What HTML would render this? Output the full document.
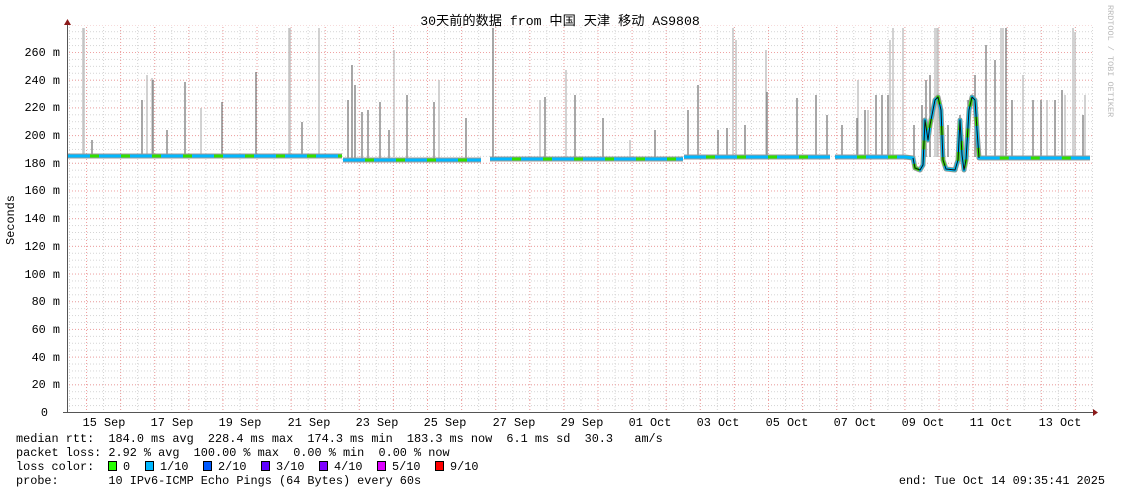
<!DOCTYPE html>
<html><head><meta charset="utf-8"><style>
html,body{margin:0;padding:0;background:#fff;}
body{width:1121px;height:494px;position:relative;overflow:hidden;font-family:"Liberation Mono","DejaVu Sans Mono","Noto Sans CJK SC",monospace;}
svg{position:absolute;left:0;top:0;}
.t{font-family:"Liberation Mono","Noto Sans CJK SC",monospace;font-size:11.85px;fill:#000;}
</style></head><body>
<svg width="1121" height="494" viewBox="0 0 1121 494">
<defs>
<pattern id="hmin" x="0" y="412" width="1025" height="6.923" patternUnits="userSpaceOnUse">
<line x1="0" y1="0.5" x2="1025" y2="0.5" stroke="#d4d4d4" stroke-width="1" stroke-dasharray="1,2"/>
</pattern>
<pattern id="vmin" x="86" y="0" width="17.05" height="400" patternUnits="userSpaceOnUse">
<line x1="0.5" y1="0" x2="0.5" y2="400" stroke="#d4d4d4" stroke-width="1" stroke-dasharray="1,2"/>
</pattern>
<pattern id="hmaj" x="0" y="412" width="1025" height="27.69" patternUnits="userSpaceOnUse">
<line x1="0" y1="0.5" x2="1025" y2="0.5" stroke="#f0a0a0" stroke-width="1" stroke-dasharray="1,2"/>
</pattern>
<pattern id="vmaj" x="86" y="0" width="34.1" height="400" patternUnits="userSpaceOnUse">
<line x1="0.5" y1="0" x2="0.5" y2="400" stroke="#f0a0a0" stroke-width="1" stroke-dasharray="1,2"/>
</pattern>
</defs>
<rect x="67" y="25" width="1026" height="387" fill="url(#hmin)"/>
<rect x="67" y="25" width="1026" height="387" fill="url(#vmin)"/>
<rect x="67" y="25" width="1026" height="387" fill="url(#hmaj)"/>
<rect x="67" y="25" width="1026" height="387" fill="url(#vmaj)"/>

<g stroke="#c4c4c4" stroke-width="1.5">
<path d="M83 157V28M84 157V28M147 157V75M152 157V78M201 157V108M289 157V28M290 157V28M319 157V28M394 157V50M566 157V70M733 157V28M736 157V40M766 157V50M890 157V40M893 157V28M903 157V28M935 157V28M937 157V28M938 157V28M1001 157V28M1003 157V28M1073 157V28M1075 157V32M1085 157V95M439 160V80M540 160V100M630 160V140M858 157V80M868 157V110M1023 157V75M1047 157V100M1065 157V95"/>
</g>
<g stroke="#7a7a7a" stroke-width="1.3">
<path d="M92 157V140M142 157V100M153 157V80M167 157V130M185 157V82M222 157V102M256 157V72M302 157V122M348 160V100M352 160V65M355 160V85M362 160V112M368 160V110M380 160V102M389 160V130M407 160V95M434 160V102M466 160V118M493 160V28M545 160V97M575 160V95M603 160V118M655 160V130M688 157V110M698 157V85M718 157V130M727 157V128M745 157V125M767 157V92M797 157V98M816 157V95M827 157V115M842 157V125M857 157V118M865 157V110M876 157V95M882 157V95M888 157V95M914 157V125M922 157V105M926 157V80M930 157V75M948 157V125M960 157V115M968 157V100M975 157V75M986 157V45M995 157V60M1006 157V28M1012 157V100M1033 157V100M1041 157V100M1055 157V100M1062 157V90M1083 157V115"/>
</g>
<g fill="none" stroke-linejoin="round">
<path id="m" d="M68 156H342 M343 160H481 M490 159H683 M684 157H830 M835 157H905 L913 158 L915 168 L920 170 L923 165 L925 120 L928 140 L930 125 L935 100 L938 97 L941 110 L943 160 L946 169 L955 170 L958 160 L960 120 L962 155 L964 170 L966 160 L969 110 L972 97 L975 100 L977 130 L979 158 H1090" stroke="#999" stroke-width="5"/>
<path d="M68 156H342 M343 160H481 M490 159H683 M684 157H830 M835 157H905 L913 158 L915 168 L920 170 L923 165 L925 120 L928 140 L930 125 L935 100 L938 97 L941 110 L943 160 L946 169 L955 170 L958 160 L960 120 L962 155 L964 170 L966 160 L969 110 L972 97 L975 100 L977 130 L979 158 H1090" stroke="#2fe000" stroke-width="3"/>
<path d="M68 156H342 M343 160H481 M490 159H683 M684 157H830 M835 157H905 L913 158 L915 168 L920 170 L923 165 L925 120 L928 140 L930 125 L935 100 L938 97 L941 110 L943 160 L946 169 L955 170 L958 160 L960 120 L962 155 L964 170 L966 160 L969 110 L972 97 L975 100 L977 130 L979 158 H1090" stroke="#00b8ff" stroke-width="3" stroke-dasharray="22,9"/>
<path d="M913 158 L915 168 L920 170 L923 165 L925 120 L928 140 L930 125 L935 100 L938 97 L941 110 L943 160 L946 169 L955 170 L958 160 L960 120 L962 155 L964 170 L966 160 L969 110 L972 97 L975 100 L977 130 L979 158" stroke="#111" stroke-width="1"/>
</g>

<line x1="67.5" y1="25" x2="67.5" y2="413" stroke="#555"/>
<line x1="63" y1="412.5" x2="1093" y2="412.5" stroke="#555"/>
<path d="M64 25 L67.5 19 L71 25Z" fill="#8b1a1a"/>
<path d="M1093 409 L1098 412.5 L1093 416Z" fill="#8b1a1a"/>

<g class="t" text-anchor="end">
<text x="60" y="56">260 m</text><text x="60" y="84">240 m</text><text x="60" y="111">220 m</text><text x="60" y="139">200 m</text><text x="60" y="167">180 m</text><text x="60" y="194">160 m</text><text x="60" y="222">140 m</text><text x="60" y="250">120 m</text><text x="60" y="278">100 m</text><text x="60" y="305">80 m</text><text x="60" y="333">60 m</text><text x="60" y="361">40 m</text><text x="60" y="388">20 m</text><text x="48" y="416">0</text>
</g>
<g class="t" text-anchor="middle">
<text x="104" y="426">15 Sep</text><text x="172" y="426">17 Sep</text><text x="240" y="426">19 Sep</text><text x="309" y="426">21 Sep</text><text x="377" y="426">23 Sep</text><text x="445" y="426">25 Sep</text><text x="514" y="426">27 Sep</text><text x="582" y="426">29 Sep</text><text x="650" y="426">01 Oct</text><text x="718" y="426">03 Oct</text><text x="787" y="426">05 Oct</text><text x="855" y="426">07 Oct</text><text x="923" y="426">09 Oct</text><text x="991" y="426">11 Oct</text><text x="1060" y="426">13 Oct</text>
</g>
<text class="t" x="560" y="25" text-anchor="middle" style="font-size:13.2px">30天前的数据 from 中国 天津 移动 AS9808</text>
<text class="t" x="0" y="0" transform="translate(14,220) rotate(-90)" text-anchor="middle">Seconds</text>
<text x="0" y="0" transform="translate(1108,5) rotate(90)" style="font-family:'Liberation Mono',monospace;font-size:8.5px;fill:#bbb">RRDTOOL / TOBI OETIKER</text>

<g class="t">
<text x="16" y="442" xml:space="preserve">median rtt:  184.0 ms avg  228.4 ms max  174.3 ms min  183.3 ms now  6.1 ms sd  30.3   am/s</text>
<text x="16" y="456" xml:space="preserve">packet loss: 2.92 % avg  100.00 % max  0.00 % min  0.00 % now</text>
<text x="16" y="470" xml:space="preserve">loss color:</text>
<text x="16" y="484" xml:space="preserve">probe:       10 IPv6-ICMP Echo Pings (64 Bytes) every 60s</text>
<text x="1105" y="484" text-anchor="end" xml:space="preserve">end: Tue Oct 14 09:35:41 2025</text>
<text x="123" y="470">0</text>
<text x="160" y="470">1/10</text>
<text x="218" y="470">2/10</text>
<text x="276" y="470">3/10</text>
<text x="334" y="470">4/10</text>
<text x="392" y="470">5/10</text>
<text x="450" y="470">9/10</text>
</g>
<g stroke="#000" stroke-width="1">
<rect x="108.5" y="461.5" width="8" height="9" fill="#26ff00"/>
<rect x="145.5" y="461.5" width="8" height="9" fill="#00b8ff"/>
<rect x="203.5" y="461.5" width="8" height="9" fill="#0059ff"/>
<rect x="261.5" y="461.5" width="8" height="9" fill="#5e00ff"/>
<rect x="319.5" y="461.5" width="8" height="9" fill="#7e00ff"/>
<rect x="377.5" y="461.5" width="8" height="9" fill="#dd00ff"/>
<rect x="435.5" y="461.5" width="8" height="9" fill="#ff0000"/>
</g>
</svg>
</body></html>
